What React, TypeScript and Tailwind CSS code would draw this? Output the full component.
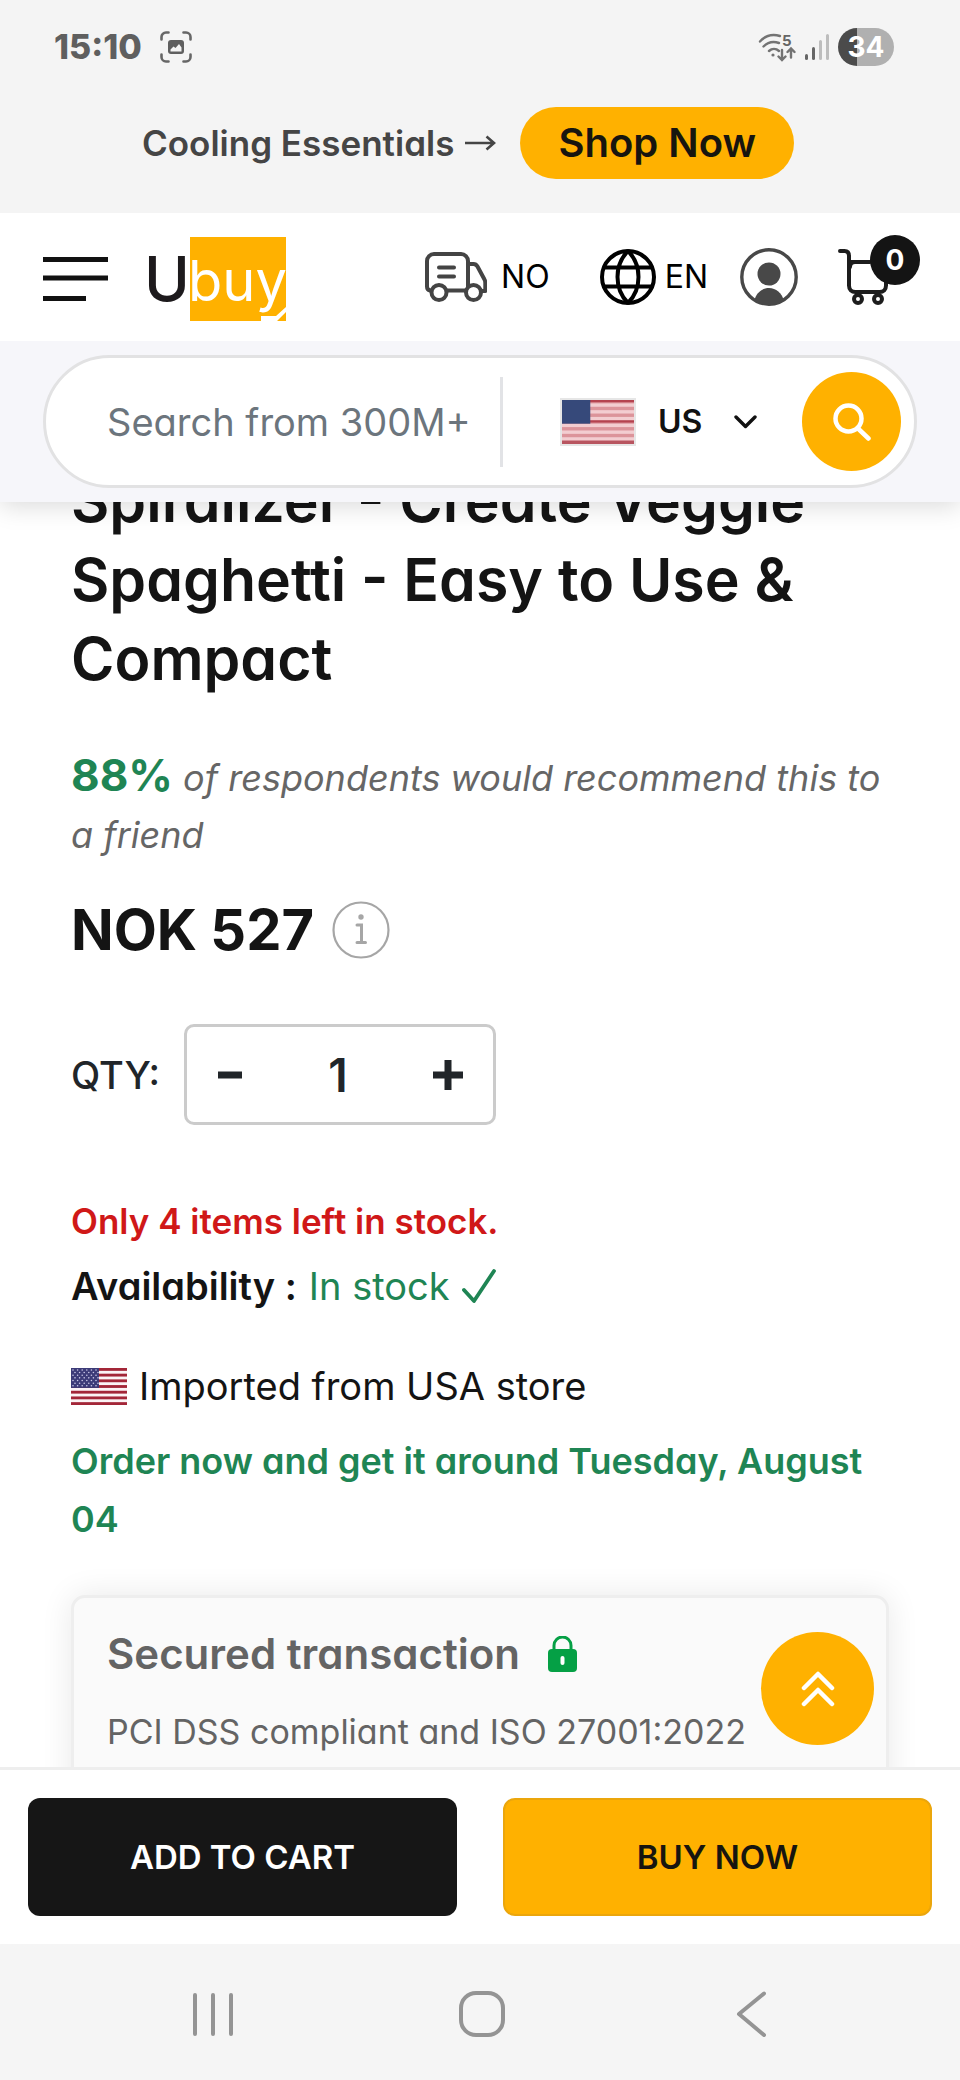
import { useState } from "react";

const STRIPES = [0, 1, 2, 3, 4, 5, 6];

function UsFlag({ className, faded = false }: { className: string; faded?: boolean }) {
  const rows = faded ? [] : [0, 1, 2, 3, 4, 5, 6];
  return (
    <svg className={className} viewBox="0 0 56 39" preserveAspectRatio="none" aria-hidden="true">
      <rect width="56" height="39" fill={faded ? "#f3cdd0" : "#fbf3f5"} />
      {STRIPES.map((i) => (
        <rect key={i} y={i * 6} width="56" height="3" fill={faded ? "#dc949a" : "#a32638"} />
      ))}
      {faded && (
        <>
          <rect width="56" height="2" fill="#b5434f" />
          <rect y="18" width="56" height="2" fill="#b5434f" />
          <rect y="36" width="56" height="3" fill="#b85560" />
        </>
      )}
      <rect width={faded ? 22 : 28} height="21" fill={faded ? "#36497a" : "#3c3b78"} />
      {rows.map((r) =>
        [0, 1, 2, 3, 4, 5].map((c) => (
          <circle key={`${r}-${c}`} cx={2 + c * 4.6 + (r % 2) * 2} cy={2 + r * 2.8} r="0.8" fill="#c9c6e6" />
        )),
      )}
    </svg>
  );
}

function StatusBar() {
  return (
    <div className="flex h-[72px] items-center justify-between pt-[21px] pr-[66px] pl-[54px]">
      <div className="flex items-center gap-[18px]">
        <span className="text-[34px] leading-[40px] font-extrabold text-[#5f5f5f]">15:10</span>
        <svg className="h-8 w-8" viewBox="0 0 32 32" fill="none" stroke="#666" strokeWidth="2.6" strokeLinecap="round">
          <path d="M1.5 8.500V6a4.500 4.500 0 0 1 4.500-4.500h2.500M23.500 1.500H26A4.500 4.500 0 0 1 30.500 6v2.500M30.500 23.500V26a4.500 4.500 0 0 1-4.500 4.500h-2.500M8.500 30.500H6A4.500 4.500 0 0 1 1.500 26v-2.500" />
          <rect x="8" y="9" width="16" height="14" rx="3" fill="#5f5f5f" stroke="none" />
          <path d="M10.500 20.500v-2l3-3 2 1.500 3.500-4 2.500 3.500v4z" fill="#f5f5f5" stroke="none" />
        </svg>
      </div>
      <div className="flex items-center gap-2">
        <svg className="h-[30px] w-[38px]" viewBox="0 0 38 30" fill="none" stroke="#737373" strokeWidth="2.4" strokeLinecap="round">
          <path d="M2 9.500C7.500 3.500 15 2 22 4M5.500 14.500c4.500-4.500 10-5.500 15.500-3.500M11 19c3-2.800 7-2.800 10 0" />
          <circle cx="15" cy="23" r="1.600" fill="#737373" stroke="none" />
          <path d="M24 18v9M20.500 24.500 24 28l3.500-3.500M33 25.500v-8M29.500 20l3.500-3.500 3.500 3.500" />
          <text x="24" y="14" fontSize="15" fontWeight="700" fill="#666" stroke="none">
            5
          </text>
        </svg>
        <svg className="h-[28px] w-[26px]" viewBox="0 0 26 28" strokeWidth="3" strokeLinecap="round">
          <path d="M2.500 22.500v3" stroke="#666" />
          <path d="M9.500 15.500v10" stroke="#666" />
          <path d="M16.500 8.500v17M23.500 2.500v23" stroke="#bdbdbd" />
        </svg>
        <span className="flex h-[38px] w-14 items-center justify-center rounded-full bg-linear-to-r from-[#4b4b4b] from-34% to-[#b0b0b0] to-34% text-[28px] leading-[38px] font-bold text-white">
          34
        </span>
      </div>
    </div>
  );
}

function PromoBanner() {
  return (
    <div className="flex h-[141px] items-center justify-center gap-6 pr-6">
      <span className="flex items-center gap-[10px] text-[35px] leading-[48px] font-semibold text-[#454545]">
        Cooling Essentials
        <svg className="h-4 w-8" viewBox="0 0 32 16" fill="none" stroke="#454545" strokeWidth="2.600">
          <path d="M1 8h29M22.500 1.500 30 8l-7.500 6.500" />
        </svg>
      </span>
      <a href="#shop" className="flex h-[72px] items-center rounded-full bg-[#ffb100] px-[38px] text-[40px] leading-[48px] font-semibold text-[#17150f]">
        Shop Now
      </a>
    </div>
  );
}

function Logo() {
  return (
    <a href="#home" aria-label="Ubuy" className="ml-9 block">
      <svg className="h-[84px] w-[142px] overflow-visible" viewBox="0 0 142 84">
        <rect x="46" y="0" width="96" height="84" fill="#ffb100" />
        <text x="0" y="64" fontSize="62" fontWeight="500" fill="#1d1a1c">
          U
        </text>
        <text x="44" y="64" fontSize="56" fontWeight="400" fill="#fff">
          buy
        </text>
        <path d="M117 79h15l10-9v5l-9 9h-16z" fill="#fff" />
      </svg>
    </a>
  );
}

function HeaderBar() {
  return (
    <div className="flex h-32 items-center bg-white pr-10 pl-[43px]">
      <div className="flex items-center pt-1">
        <button type="button" aria-label="Menu">
          <svg className="h-11 w-[65px]" viewBox="0 0 65 44" fill="#111">
            <path d="M0 0h65v5H0zM0 18.500h65v5H0zM0 39h43v5H0z" />
          </svg>
        </button>
        <Logo />
      </div>
      <div className="ml-auto flex items-center text-[32px] leading-[40px] font-normal text-black">
        <button type="button" className="flex items-center gap-[14px]">
          <svg className="h-[50px] w-[62px]" viewBox="0 0 62 50" fill="none" stroke="#444" strokeWidth="4" strokeLinejoin="round" strokeLinecap="round">
            <path d="M5 38.500c-2-.5-3-2-3-4V9a7 7 0 0 1 7-7h27a7 7 0 0 1 7 7v29.500H23M43 12h5.500c2 0 3 .8 4 2.500l7 13c.7 1.200.8 2 .8 3.500v8H57" />
            <circle cx="14" cy="40.500" r="7.500" fill="#fff" />
            <circle cx="48.500" cy="40.500" r="7.500" fill="#fff" />
            <path d="M14 15.500h15M14 24.500h15" />
          </svg>
          NO
        </button>
        <button type="button" className="ml-[50px] flex items-center gap-[9px]">
          <svg className="h-14 w-14" viewBox="0 0 56 56" fill="none" stroke="#000" strokeWidth="4">
            <circle cx="28" cy="28" r="26" />
            <path d="M28 2C14 16 14 40 28 54M28 2c14 14 14 38 0 52M4.500 18.500h47M4.500 37.500h47" />
          </svg>
          EN
        </button>
        <button type="button" aria-label="Account" className="ml-8">
          <svg className="block h-[58px] w-[58px]" viewBox="0 0 58 58" fill="#484848">
            <circle cx="29" cy="29" r="27.200" fill="none" stroke="#484848" strokeWidth="3.400" />
            <circle cx="29" cy="26" r="11.500" />
            <path d="M14.500 52c1.500-7 7.500-12 14.500-12s13 5 14.500 12C37 58.500 21 58.500 14.500 52z" />
          </svg>
        </button>
        <a href="#cart" aria-label="Cart" className="relative ml-[40px] block w-[82px]">
          <svg className="h-[58px] w-[50px]" viewBox="0 0 50 58" fill="none" stroke="#1d1d1d" strokeWidth="4" strokeLinecap="round" strokeLinejoin="round">
            <path d="M2 3h4.500c3 0 4.500 2 4.500 5v29.500c0 4 2.500 6.500 6.500 6.500h24c4 0 6.500-2.500 6.500-6.500V30M12 14h20M17 14c-3 0-5 1.500-5 5" />
            <circle cx="20" cy="51" r="4" />
            <circle cx="40" cy="51" r="4" />
          </svg>
          <span className="absolute -top-[13px] right-0 flex h-[50px] w-[50px] items-center justify-center rounded-full bg-[#141414] text-[28px] font-bold text-white">
            0
          </span>
        </a>
      </div>
    </div>
  );
}

function SearchBar() {
  return (
    <div className="bg-[#f6f6fa] px-[43px] pt-[14px] pb-[14px]">
      <form className="flex h-[133px] items-center rounded-full border-[3px] border-[#e2e2e3] bg-white pr-[13px] pl-[61px]" onSubmit={(e) => e.preventDefault()}>
        <input
          type="text"
          aria-label="Search"
          placeholder="Search from 300M+"
          className="h-full min-w-0 flex-1 text-[38px] leading-[48px] outline-none placeholder:text-[#6c757d]"
        />
        <span className="h-[90px] w-[3px] bg-[#e2e3e6]" />
        <label className="ml-[57px] flex items-center">
          <UsFlag className="h-12 w-[76px] border-2 border-[#e6e6e6]" faded />
          <select aria-label="Store" className="ml-[22px] w-[76px] appearance-none bg-transparent text-[32px] leading-[40px] font-semibold text-[#111] outline-none">
            <option>US</option>
          </select>
          <svg className="h-[14px] w-[23px]" viewBox="0 0 23 14" fill="none" stroke="#111" strokeWidth="3.400" strokeLinecap="round" strokeLinejoin="round">
            <path d="m2 2 9.500 9.500L21 2" />
          </svg>
        </label>
        <button type="submit" aria-label="Search" className="ml-[45px] flex h-[99px] w-[99px] items-center justify-center rounded-full bg-[#ffb100]">
          <svg className="h-[38px] w-[38px]" viewBox="0 0 38 38" fill="none" stroke="#fff" strokeWidth="4.500" strokeLinecap="round">
            <circle cx="15.500" cy="15.500" r="13" />
            <path d="M25 25.500 35.500 35.500" />
          </svg>
        </button>
      </form>
    </div>
  );
}

function Quantity() {
  const [qty, setQty] = useState(1);
  return (
    <div className="mt-[62px] flex items-center gap-6 text-[#212529]">
      <label htmlFor="qty" className="text-[38px] leading-[48px] font-medium">
        QTY:
      </label>
      <div className="flex h-[101px] w-[312px] items-center justify-between rounded-[10px] border-[3px] border-[#cbcbcb] px-[30px]">
        <button type="button" aria-label="Decrease" onClick={() => setQty(Math.max(1, qty - 1))}>
          <svg className="h-[30px] w-[26px]" viewBox="0 0 26 30" fill="#212529">
            <path d="M1 11.500h24v7H1z" />
          </svg>
        </button>
        <input id="qty" type="text" value={qty} readOnly className="w-20 text-center text-[46px] leading-[56px] font-semibold outline-none" />
        <button type="button" aria-label="Increase" onClick={() => setQty(qty + 1)}>
          <svg className="h-[30px] w-[30px]" viewBox="0 0 30 30" fill="#212529">
            <path d="M11.500 0h7v11.500H30v7H18.500V30h-7V18.500H0v-7h11.500z" />
          </svg>
        </button>
      </div>
    </div>
  );
}

function SecuredCard() {
  return (
    <section className="mt-[47px] rounded-t-[14px] border-[3px] border-[#eee] bg-[#fafafa] px-[33px] pt-[32px] pb-16 text-[#646464] shadow-[0_0_32px_rgba(0,0,0,0.09)]">
      <h2 className="flex items-center gap-7 text-[42px] leading-[48px] font-semibold">
        Secured transaction
        <svg className="h-9 w-[29px]" viewBox="0 0 29 36" fill="#05a045">
          <path d="M6 15V9.500a8.500 8.500 0 0 1 17 0V15" fill="none" stroke="#05a045" strokeWidth="3" />
          <rect y="13" width="29" height="23" rx="4" />
          <rect x="12.500" y="20" width="4" height="9" rx="2" fill="#fff" />
        </svg>
      </h2>
      <p className="mt-[30px] text-[34px] leading-[48px]">PCI DSS compliant and ISO 27001:2022</p>
    </section>
  );
}

function Product() {
  return (
    <main className="min-h-0 flex-1 overflow-hidden bg-white px-[71px]">
      <h1 className="-mt-[41px] text-[59px] leading-[79px] font-semibold text-[#141414]">
        Spiralizer - Create Veggie Spaghetti - Easy to Use &amp; Compact
      </h1>
      <p className="mt-[49px] text-[36px] leading-[57px] text-[#666] italic">
        <strong className="text-[44px] font-bold text-[#1f8554] not-italic">88%</strong> of respondents would recommend this to a friend
      </p>
      <div className="mt-[34px] flex items-center gap-[18px]">
        <span className="text-[56px] leading-[64px] font-bold text-[#141414]">NOK 527</span>
        <button type="button" aria-label="Price details">
          <svg className="block h-[58px] w-[58px]" viewBox="0 0 58 58" fill="none" stroke="#a6a6a6" strokeLinecap="round">
            <circle cx="29" cy="29" r="27.500" strokeWidth="2.200" />
            <path d="M25 24h4.500v17M25 41.500h8.500" strokeWidth="3" />
            <circle cx="29" cy="16" r="2.700" fill="#a6a6a6" stroke="none" />
          </svg>
        </button>
      </div>
      <Quantity />
      <p className="mt-[72px] text-[35px] leading-[48px] font-semibold text-[#d01818]">Only 4 items left in stock.</p>
      <p className="mt-[17px] flex items-center gap-3 text-[38px] leading-[48px] font-semibold text-[#141414]">
        Availability :<span className="font-normal text-[#1f8554]">In stock</span>
        <svg className="h-[38px] w-[34px]" viewBox="0 0 34 38" fill="none" stroke="#1f8554" strokeWidth="3.800" strokeLinecap="round" strokeLinejoin="round">
          <path d="m2 23 10 11L32 4" />
        </svg>
      </p>
      <p className="mt-[52px] flex items-center gap-3 text-[38px] leading-[48px] text-[#141414]">
        <UsFlag className="h-[37px] w-14" />
        Imported from USA store
      </p>
      <p className="mt-[22px] text-[36px] leading-[58px] font-semibold text-[#1f8554]">Order now and get it around Tuesday, August 04</p>
      <SecuredCard />
    </main>
  );
}

function BuyBar() {
  return (
    <div className="relative grid grid-cols-2 gap-[46px] border-t-[3px] border-[#eee] bg-white px-7 py-7 text-[33px] leading-[48px] font-semibold">
      <button type="button" aria-label="Back to top" className="absolute right-[86px] bottom-full mb-[25px] flex h-[113px] w-[113px] items-center justify-center rounded-full bg-[#ffb100]">
        <svg className="h-9 w-[34px]" viewBox="0 0 34 36" fill="none" stroke="#fff" strokeWidth="4.500" strokeLinecap="round" strokeLinejoin="round">
          <path d="M3 17 17 3l14 14M3 33l14-14 14 14" />
        </svg>
      </button>
      <button type="button" className="h-[118px] rounded-[12px] bg-[#161616] text-white">
        ADD TO CART
      </button>
      <button type="button" className="h-[118px] rounded-[12px] border-2 border-[#eba60c] bg-[#ffb100] text-[#17150f]">
        BUY NOW
      </button>
    </div>
  );
}

function SystemNav() {
  return (
    <nav className="flex h-[136px] items-center justify-around bg-[#f5f5f5] pt-1 pr-[74px] pl-[78px]">
      <button type="button" aria-label="Recents">
        <svg className="h-[46px] w-[46px]" viewBox="0 0 46 46" stroke="#949494" strokeWidth="4" strokeLinecap="round">
          <path d="M5 4v39M23 4v39M41 4v39" />
        </svg>
      </button>
      <button type="button" aria-label="Home">
        <svg className="h-[46px] w-[46px]" viewBox="0 0 46 46" fill="none" stroke="#949494" strokeWidth="4">
          <rect x="2" y="2" width="42" height="42" rx="15" />
        </svg>
      </button>
      <button type="button" aria-label="Back">
        <svg className="h-[46px] w-[46px]" viewBox="0 0 46 46" fill="none" stroke="#949494" strokeWidth="4" strokeLinecap="round" strokeLinejoin="round">
          <path d="M36 2.500 11 23l25 21" />
        </svg>
      </button>
    </nav>
  );
}

export default function App() {
  return (
    <div className="flex h-screen flex-col overflow-hidden bg-white font-['Inter',sans-serif] [font-feature-settings:'cv11']">
      <header className="relative z-10 bg-[#f4f4f4] shadow-[0_4px_24px_rgba(0,0,0,0.15)]">
        <StatusBar />
        <PromoBanner />
        <HeaderBar />
        <SearchBar />
      </header>
      <Product />
      <BuyBar />
      <SystemNav />
    </div>
  );
}
